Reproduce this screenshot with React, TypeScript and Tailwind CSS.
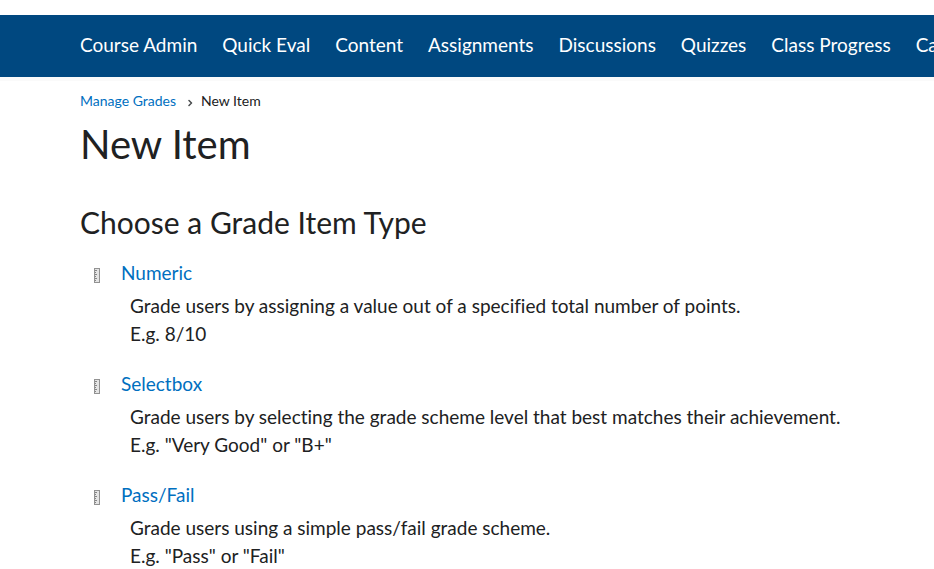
const navLinks = [
  "Course Admin",
  "Quick Eval",
  "Content",
  "Assignments",
  "Discussions",
  "Quizzes",
  "Class Progress",
  "Ca",
];

const itemTypes = [
  {
    name: "Numeric",
    description: "Grade users by assigning a value out of a specified total number of points.",
    example: "E.g. 8/10",
  },
  {
    name: "Selectbox",
    description: "Grade users by selecting the grade scheme level that best matches their achievement.",
    example: 'E.g. "Very Good" or "B+"',
  },
  {
    name: "Pass/Fail",
    description: "Grade users using a simple pass/fail grade scheme.",
    example: 'E.g. "Pass" or "Fail"',
  },
];

function RulerIcon() {
  return (
    <svg width="6" height="15" viewBox="0 0 6 15" className="mt-1 shrink-0" aria-hidden="true" shapeRendering="crispEdges">
      <rect x="0.5" y="0.5" width="5" height="14" fill="#e4e4e4" stroke="#929292" />
      <path d="M1 2.5h2M1 4.5h1M1 6.5h2M1 8.5h1M1 10.5h2M1 12.5h1" stroke="#848484" />
    </svg>
  );
}

function Separator() {
  return (
    <svg width="5" height="8" viewBox="0 0 5 8" className="mt-1 mr-2 ml-3 shrink-0" aria-hidden="true">
      <path d="M1 1.5l2.5 2.5L1 6.5" fill="none" stroke="#494c4e" strokeWidth="1.5" strokeLinecap="round" strokeLinejoin="round" />
    </svg>
  );
}

export default function App() {
  return (
    <div className="overflow-x-hidden bg-white pt-[15px] font-['Lato',sans-serif] text-[#202122] [font-variant-ligatures:none]">
      <nav className="overflow-hidden border-b-4 border-[#fafafa] bg-[#004880] pl-20">
        <ul className="flex h-[62px] items-center gap-[25px] pb-0.5 text-[19px] whitespace-nowrap text-white">
          {navLinks.map((label) => (
            <li key={label}>
              <a href="#">{label}</a>
            </li>
          ))}
        </ul>
      </nav>
      <main className="pl-20">
        <nav aria-label="Breadcrumb" className="flex items-center pt-2 text-[14px] leading-6">
          <a href="#" className="text-[#006fbf]">
            Manage Grades
          </a>
          <Separator />
          <span>New Item</span>
        </nav>
        <h1 className="mt-[7px] text-[40px] leading-[48px]">New Item</h1>
        <h2 className="mt-[34px] text-[30px] leading-10">Choose a Grade Item Type</h2>
        <ul className="mt-[17px] text-[19px] leading-7">
          {itemTypes.map((item) => (
            <li key={item.name} className="mb-[22px] pl-[14px]">
              <div className="flex items-center gap-[21px]">
                <RulerIcon />
                <a href="#" className="text-[#006fbf]">
                  {item.name}
                </a>
              </div>
              <div className="mt-[5px] pl-9">
                <p>{item.description}</p>
                <p>{item.example}</p>
              </div>
            </li>
          ))}
        </ul>
      </main>
    </div>
  );
}
